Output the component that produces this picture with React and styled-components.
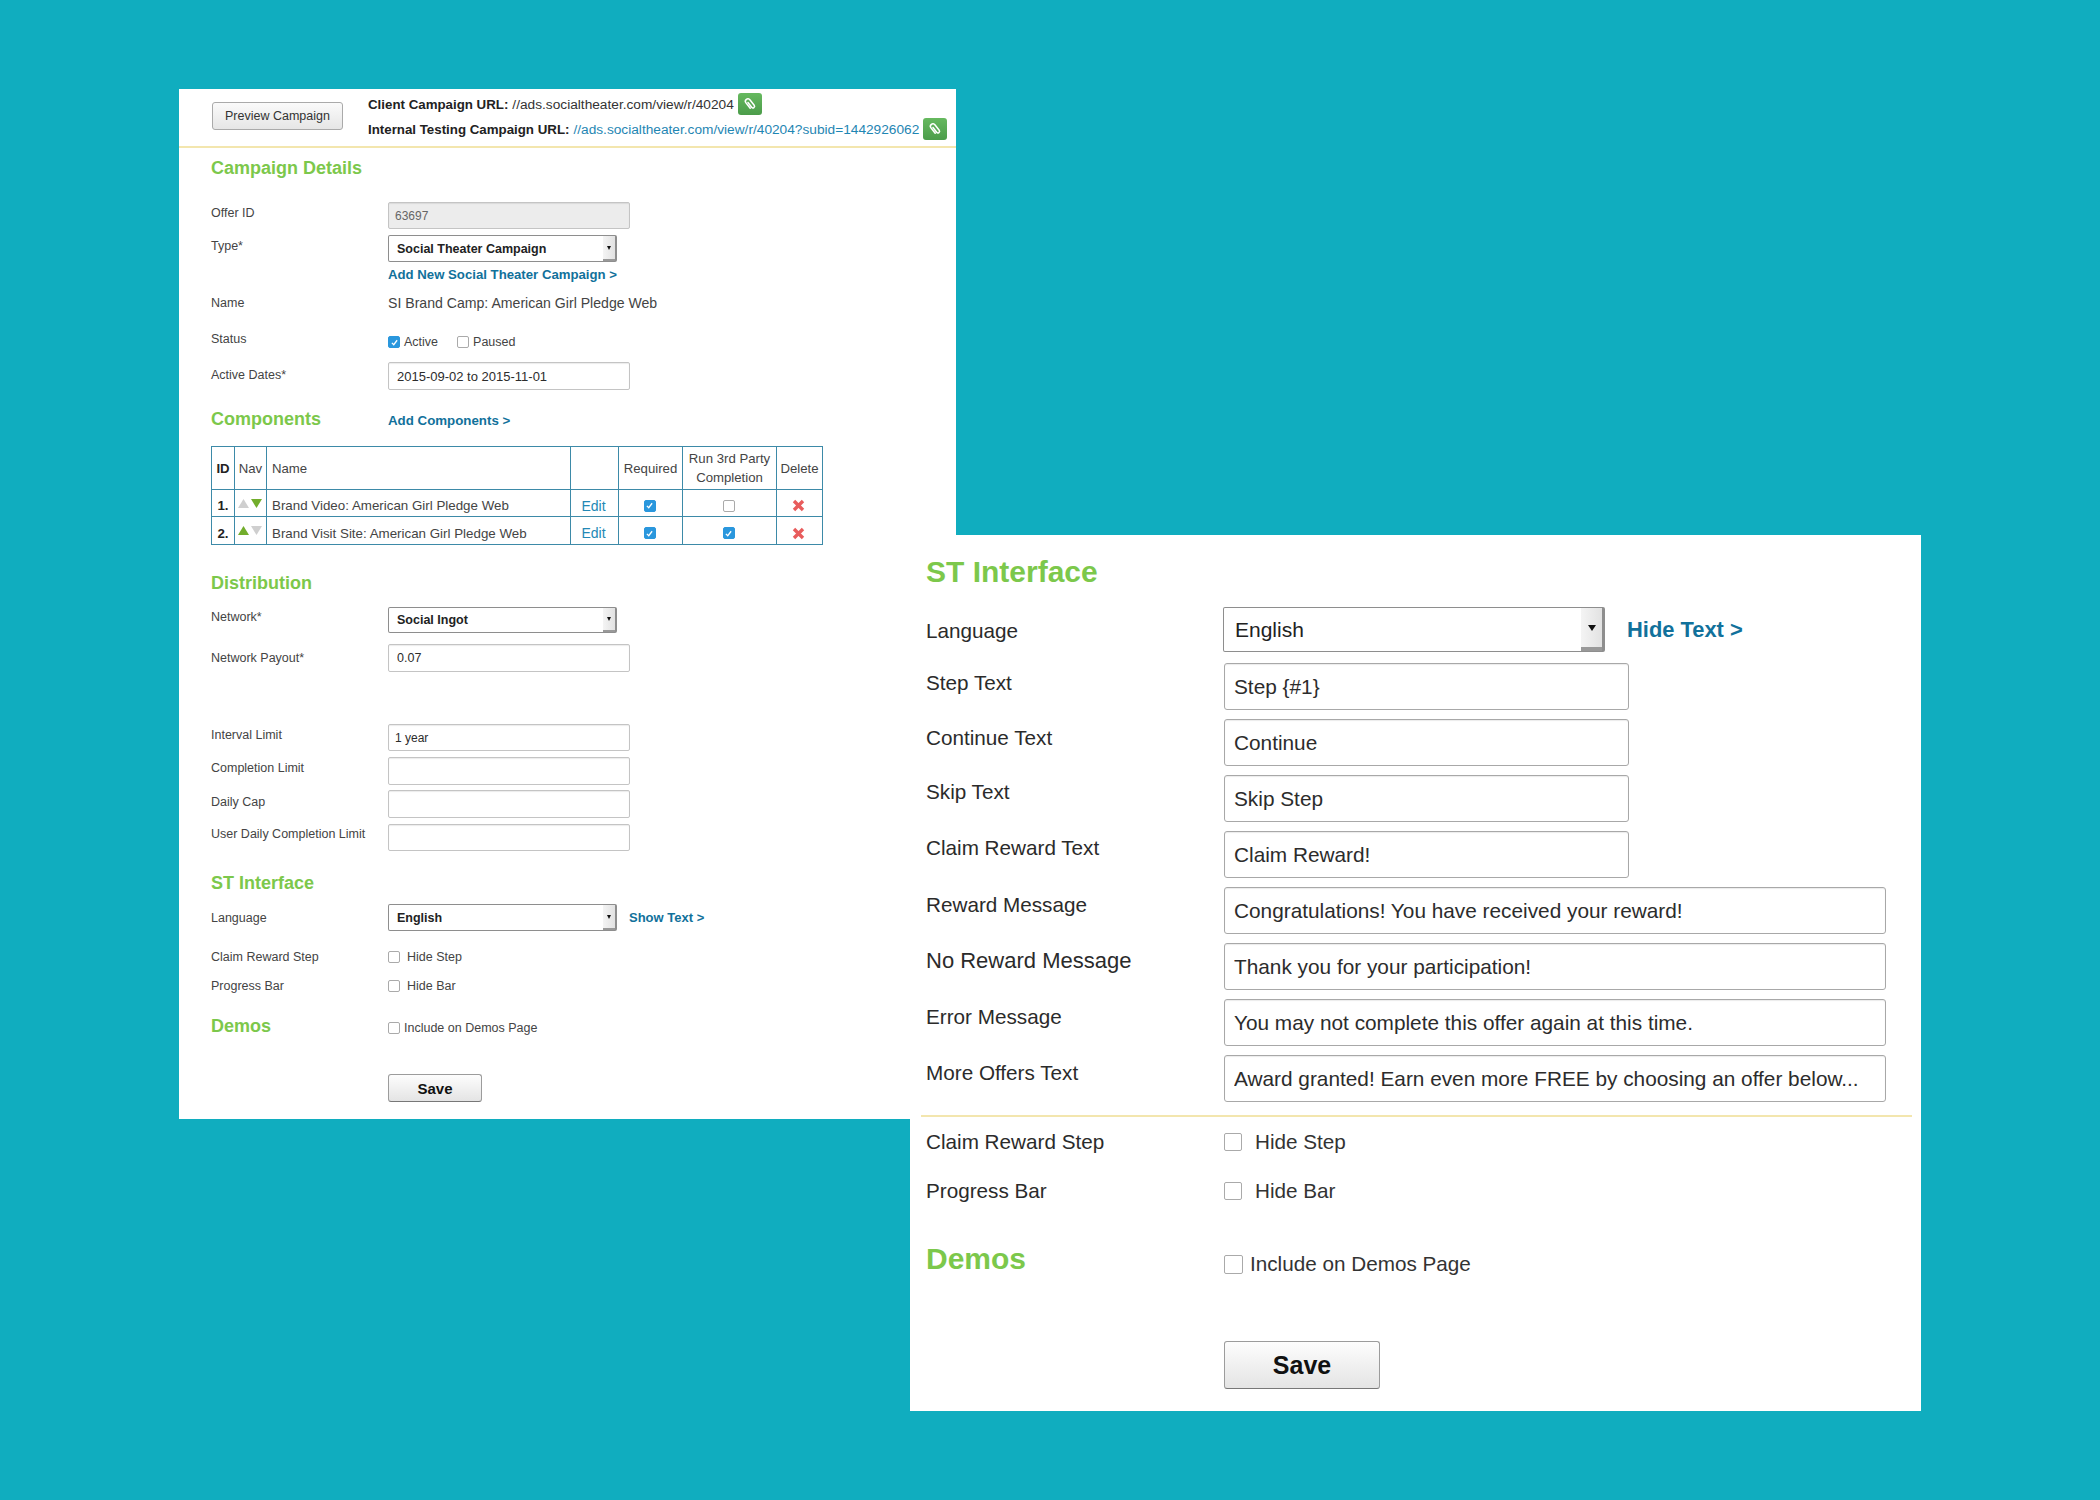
import React from "react";
import styled, { createGlobalStyle } from "styled-components";

const GREEN = "#7cc84b";
const LINK = "#11719b";
const RULE = "#f3e6ae";

const GlobalStyle = createGlobalStyle`
  html, body {
    margin: 0;
    padding: 0;
    background: #10adbf;
    font-family: "Liberation Sans", Arial, sans-serif;
  }
`;

const Stage = styled.div`
  position: relative;
  width: 2100px;
  height: 1500px;
  overflow: hidden;
  background: #10adbf;
`;

// the two screenshots float over each other on the teal canvas
const Window = styled.section`
  position: absolute;
  left: ${(p) => p.$left}px;
  top: ${(p) => p.$top}px;
  width: ${(p) => p.$width}px;
  height: ${(p) => p.$height}px;
  box-sizing: border-box;
  background: #fff;
  padding-left: ${(p) => p.$pad}px;
`;

const Toolbar = styled.header`
  display: flex;
  align-items: center;
  gap: 25px;
  height: 59px;
  box-sizing: border-box;
  margin-left: -32px;
  padding: 0 0 2px 33px;
  border-bottom: 2px solid ${RULE};
`;

const PreviewButton = styled.button`
  width: 131px;
  height: 28px;
  margin-top: -1px;
  padding: 0;
  border: 1px solid #aaa;
  border-radius: 3px;
  background: linear-gradient(#fafafa, #e6e6e6);
  color: #333;
  font: 12.5px "Liberation Sans", Arial, sans-serif;
`;

const UrlList = styled.div`
  display: flex;
  flex-direction: column;
  gap: 1px;
`;

const UrlLine = styled.div`
  display: flex;
  align-items: center;
  gap: 4px;
  height: 24px;
  font-size: 13.7px;
  color: #333;
  white-space: nowrap;
  b {
    color: #222;
    font-size: 13.3px;
  }
  a {
    color: ${(p) => (p.$linked ? "#1f86b3" : "#333")};
  }
`;

const ClipButton = styled.span`
  display: inline-flex;
  align-items: center;
  justify-content: center;
  width: 24px;
  height: 22px;
  border-radius: 3px;
  background: linear-gradient(#66b95f, #4b9c4a);
`;

const Row = styled.div`
  display: grid;
  grid-template-columns: ${(p) => p.$label}px 1fr;
  margin-top: ${(p) => p.$mt || 0}px;
`;

const Label = styled.div`
  padding-top: ${(p) => p.$pt || 0}px;
  line-height: ${(p) => (p.$big ? 28 : 20)}px;
  font-size: ${(p) => p.$fs || (p.$big ? 20.7 : 12.5)}px;
  color: ${(p) => (p.$big ? "#2b2b2b" : "#444")};
  white-space: nowrap;
`;

const Heading = styled.h2`
  margin: ${(p) => p.$mt || 0}px 0 0;
  font-size: ${(p) => (p.$big ? 30 : 18)}px;
  line-height: ${(p) => (p.$big ? 40 : 24)}px;
  font-weight: 700;
  color: ${GREEN};
  white-space: nowrap;
`;

const TextInput = styled.input`
  display: block;
  box-sizing: border-box;
  width: ${(p) => p.$width}px;
  height: ${(p) => p.$height}px;
  padding: 0 0 0 ${(p) => p.$pl}px;
  border: 1px solid ${(p) => (p.$big ? "#a8a8a8" : "#c4c4c4")};
  border-radius: ${(p) => (p.$big ? 3 : 2)}px;
  box-shadow: inset 0 1px 1px rgba(0, 0, 0, 0.08);
  background: ${(p) => (p.disabled ? "#ececec" : "#fff")};
  color: ${(p) => (p.disabled ? "#666" : "#2c2c2c")};
  font: ${(p) => p.$fs || (p.$big ? 20.8 : 12)}px "Liberation Sans", Arial, sans-serif;
  outline: none;
  opacity: 1;
`;

const SelectBox = styled.div`
  display: flex;
  align-items: stretch;
  box-sizing: border-box;
  width: ${(p) => p.$width}px;
  height: ${(p) => p.$height}px;
  border: 1px solid #8e8e8e;
  border-right-width: ${(p) => (p.$big ? 3 : 2)}px;
  border-radius: 2px;
  background: #fff;
`;

const SelectValue = styled.div`
  flex: 1;
  display: flex;
  align-items: center;
  padding-left: ${(p) => (p.$big ? 11 : 8)}px;
  font-size: ${(p) => (p.$big ? 21 : 12.5)}px;
  font-weight: ${(p) => (p.$big ? 400 : 700)};
  color: #222;
`;

const SelectArrow = styled.div`
  display: flex;
  align-items: center;
  justify-content: center;
  box-sizing: border-box;
  width: ${(p) => (p.$big ? 21 : 12)}px;
  border-bottom: ${(p) => (p.$big ? 4 : 2)}px solid #999;
  background: linear-gradient(90deg, #f4f4f4, #e2e2e2);
  &::after {
    content: "";
    border-style: solid;
    border-width: ${(p) => (p.$big ? "6px 4px 0" : "4px 2.5px 0")};
    border-color: #111 transparent transparent;
  }
`;

const LinkText = styled.a`
  display: block;
  color: ${LINK};
  font-weight: 700;
  font-size: ${(p) => p.$size}px;
  line-height: ${(p) => p.$lh}px;
  margin-top: ${(p) => p.$mt || 0}px;
  white-space: nowrap;
`;

const Inline = styled.div`
  display: flex;
  align-items: center;
  gap: ${(p) => p.$gap}px;
`;

const Value = styled.div`
  font-size: 14.1px;
  line-height: 20px;
  color: #444;
  white-space: nowrap;
`;

const CheckLine = styled.label`
  display: flex;
  align-items: center;
  gap: ${(p) => p.$gap}px;
  height: ${(p) => (p.$big ? 28 : 20)}px;
  margin-top: ${(p) => p.$mt || 0}px;
  font-size: ${(p) => (p.$big ? 20.7 : 12.5)}px;
  color: ${(p) => (p.$big ? "#333" : "#444")};
  white-space: nowrap;
`;

const CheckBox = styled.span`
  display: inline-flex;
  align-items: center;
  justify-content: center;
  box-sizing: border-box;
  flex: none;
  width: ${(p) => p.$size}px;
  height: ${(p) => p.$size}px;
  border: 1px solid ${(p) => (p.$on ? "#2a97dd" : "#aaa")};
  border-radius: 2px;
  background: ${(p) => (p.$on ? "#2a97dd" : "#fff")};
`;

const SaveButton = styled.button`
  display: block;
  width: ${(p) => p.$width}px;
  height: ${(p) => p.$height}px;
  padding: 0;
  border: 1px solid #9c9c9c;
  border-bottom-color: #777;
  border-radius: 3px;
  background: linear-gradient(#fdfdfd, #e4e4e4);
  color: #111;
  font: 700 ${(p) => p.$size}px "Liberation Sans", Arial, sans-serif;
`;

const Divider = styled.hr`
  height: 2px;
  width: 991px;
  margin: 13px 0 0 -5px;
  border: 0;
  background: ${RULE};
`;

const Table = styled.table`
  width: 611px;
  margin-top: 15px;
  table-layout: fixed;
  border-collapse: collapse;
  font-size: 13.35px;
  color: #444;
`;

const Th = styled.th`
  padding: 0 ${(p) => (p.$left ? "5px" : "0")};
  height: 42px;
  border: 1px solid #3d8aa8;
  font-size: 13.2px;
  font-weight: ${(p) => (p.$bold ? 700 : 400)};
  color: ${(p) => (p.$bold ? "#222" : "#444")};
  line-height: 19px;
  text-align: ${(p) => (p.$left ? "left" : "center")};
`;

const Td = styled.td`
  padding: ${(p) => (p.$nudge ? 5 : 0)}px ${(p) => (p.$left ? "5px" : "0")} 0;
  box-sizing: border-box;
  height: ${(p) => p.$height}px;
  border: 1px solid #3d8aa8;
  font-weight: ${(p) => (p.$bold ? 700 : 400)};
  color: ${(p) => (p.$bold ? "#222" : "#444")};
  text-align: ${(p) => (p.$left ? "left" : "center")};
  white-space: nowrap;
`;

const CellCenter = styled.div`
  display: flex;
  align-items: center;
  justify-content: center;
  gap: 2px;
  padding-right: ${(p) => p.$pr || 0}px;
`;

const EditLink = styled.a`
  display: block;
  padding-right: 2px;
  color: #2388b5;
  font-size: 14px;
`;

function Clip() {
  return (
    <ClipButton>
      <svg width="16" height="16" viewBox="0 0 16 16" fill="none">
        <path
          d="M5.5 11.5V4.6a2.5 2.5 0 0 1 5 0v7a1.6 1.6 0 0 1-3.2 0V5.6"
          transform="rotate(-38 8 8)"
          stroke="#fff"
          strokeWidth="1.5"
          strokeLinecap="round"
        />
      </svg>
    </ClipButton>
  );
}

function Tick({ size }) {
  return (
    <CheckBox $size={size} $on>
      <svg width={size - 3} height={size - 3} viewBox="0 0 12 12" fill="none">
        <path d="M2.5 6.5 5 9l4.5-6" stroke="#fff" strokeWidth="1.7" />
      </svg>
    </CheckBox>
  );
}

function Check({ on, size = 12 }) {
  return on ? <Tick size={size} /> : <CheckBox $size={size} />;
}

function Select({ value, width, height, big }) {
  return (
    <SelectBox $width={width} $height={height} $big={big}>
      <SelectValue $big={big}>{value}</SelectValue>
      <SelectArrow $big={big} />
    </SelectBox>
  );
}

function Triangle({ down, on }) {
  return (
    <svg width="11" height="9" viewBox="0 0 11 9">
      <polygon
        points={down ? "0,0 11,0 5.5,9" : "5.5,0 11,9 0,9"}
        fill={on ? "#72ad2c" : "#cfcfcf"}
      />
    </svg>
  );
}

function RedX() {
  return (
    <svg width="13" height="13" viewBox="0 0 13 13">
      <path d="M2 2 11 11M11 2 2 11" stroke="#e85c5c" strokeWidth="3.4" />
    </svg>
  );
}

const components = [
  { id: "1.", name: "Brand Video: American Girl Pledge Web", up: false, down: true, third: false, height: 27 },
  { id: "2.", name: "Brand Visit Site: American Girl Pledge Web", up: true, down: false, third: true, height: 28 },
];

const limits = [
  { label: "Interval Limit", value: "1 year", mt: 52, height: 27, pt: 1 },
  { label: "Completion Limit", value: "", mt: 6, height: 28, pt: 1 },
  { label: "Daily Cap", value: "", mt: 5, height: 28, pt: 2 },
  { label: "User Daily Completion Limit", value: "", mt: 6, height: 27, pt: 0 },
];

const textFields = [
  { label: "Step Text", value: "Step {#1}", width: 405, mt: 11, pt: 6 },
  { label: "Continue Text", value: "Continue", width: 405, mt: 9, pt: 5 },
  { label: "Skip Text", value: "Skip Step", width: 405, mt: 9, pt: 3 },
  { label: "Claim Reward Text", value: "Claim Reward!", width: 405, mt: 9, pt: 3 },
  { label: "Reward Message", value: "Congratulations! You have received your reward!", width: 662, mt: 9, pt: 4 },
  { label: "No Reward Message", value: "Thank you for your participation!", width: 662, mt: 9, pt: 4, fs: 22 },
  { label: "Error Message", value: "You may not complete this offer again at this time.", width: 662, mt: 9, pt: 4 },
  { label: "More Offers Text", value: "Award granted! Earn even more FREE by choosing an offer below...", width: 662, mt: 9, pt: 4 },
];

function CampaignWindow() {
  return (
    <Window $left={179} $top={89} $width={777} $height={1030} $pad={32}>
      <Toolbar>
        <PreviewButton>Preview Campaign</PreviewButton>
        <UrlList>
          <UrlLine>
            <b>Client Campaign URL:</b>
            <a>//ads.socialtheater.com/view/r/40204</a>
            <Clip />
          </UrlLine>
          <UrlLine $linked>
            <b>Internal Testing Campaign URL:</b>
            <a>//ads.socialtheater.com/view/r/40204?subid=1442926062</a>
            <Clip />
          </UrlLine>
        </UrlList>
      </Toolbar>

      <Heading $mt={8}>Campaign Details</Heading>

      <Row $label={177} $mt={22}>
        <Label $pt={1}>Offer ID</Label>
        <TextInput disabled defaultValue="63697" $width={242} $height={27} $pl={6} />
      </Row>
      <Row $label={177} $mt={6}>
        <Label $pt={1}>Type*</Label>
        <div>
          <Select value="Social Theater Campaign" width={229} height={27} />
          <LinkText $size={13.2} $lh={16} $mt={5}>Add New Social Theater Campaign &gt;</LinkText>
        </div>
      </Row>
      <Row $label={177} $mt={10}>
        <Label>Name</Label>
        <Value>SI Brand Camp: American Girl Pledge Web</Value>
      </Row>
      <Row $label={177} $mt={16}>
        <Label>Status</Label>
        <Inline $gap={19}>
          <CheckLine $gap={4} $mt={3}><Check on />Active</CheckLine>
          <CheckLine $gap={4} $mt={3}><Check />Paused</CheckLine>
        </Inline>
      </Row>
      <Row $label={177} $mt={10}>
        <Label $pt={3}>Active Dates*</Label>
        <TextInput readOnly defaultValue="2015-09-02 to 2015-11-01" $width={242} $height={28} $pl={8} $fs={13} />
      </Row>

      <Row $label={177} $mt={17}>
        <Heading>Components</Heading>
        <LinkText $size={13.3} $lh={16} $mt={6}>Add Components &gt;</LinkText>
      </Row>
      <Table>
        <colgroup>
          <col width="23" /><col width="32" /><col width="304" /><col width="48" />
          <col width="64" /><col width="94" /><col width="46" />
        </colgroup>
        <thead>
          <tr>
            <Th $bold>ID</Th>
            <Th>Nav</Th>
            <Th $left>Name</Th>
            <Th />
            <Th>Required</Th>
            <Th>Run 3rd Party<br />Completion</Th>
            <Th>Delete</Th>
          </tr>
        </thead>
        <tbody>
          {components.map((c) => (
            <tr key={c.id}>
              <Td $nudge $bold $height={c.height}>{c.id}</Td>
              <Td $height={c.height}>
                <CellCenter $pr={2}>
                  <Triangle on={c.up} />
                  <Triangle down on={c.down} />
                </CellCenter>
              </Td>
              <Td $nudge $left $height={c.height}>{c.name}</Td>
              <Td $nudge $height={c.height}><EditLink>Edit</EditLink></Td>
              <Td $nudge $height={c.height}><CellCenter $pr={2}><Check on /></CellCenter></Td>
              <Td $nudge $height={c.height}><CellCenter $pr={2}><Check on={c.third} /></CellCenter></Td>
              <Td $nudge $height={c.height}><CellCenter $pr={2}><RedX /></CellCenter></Td>
            </tr>
          ))}
        </tbody>
      </Table>

      <Heading $mt={26}>Distribution</Heading>
      <Row $label={177} $mt={12}>
        <Label>Network*</Label>
        <Select value="Social Ingot" width={229} height={26} />
      </Row>
      <Row $label={177} $mt={11}>
        <Label $pt={4}>Network Payout*</Label>
        <TextInput readOnly defaultValue="0.07" $width={242} $height={28} $pl={8} $fs={12.5} />
      </Row>

      {limits.map((l) => (
        <Row key={l.label} $label={177} $mt={l.mt}>
          <Label $pt={l.pt}>{l.label}</Label>
          <TextInput readOnly defaultValue={l.value} $width={242} $height={l.height} $pl={6} />
        </Row>
      ))}

      <Heading $mt={20}>ST Interface</Heading>
      <Row $label={177} $mt={9}>
        <Label $pt={4}>Language</Label>
        <Inline $gap={12}>
          <Select value="English" width={229} height={27} />
          <LinkText $size={13} $lh={16}>Show Text &gt;</LinkText>
        </Inline>
      </Row>
      <Row $label={177} $mt={16}>
        <Label>Claim Reward Step</Label>
        <CheckLine $gap={7}><Check />Hide Step</CheckLine>
      </Row>
      <Row $label={177} $mt={9}>
        <Label>Progress Bar</Label>
        <CheckLine $gap={7}><Check />Hide Bar</CheckLine>
      </Row>
      <Row $label={177} $mt={18}>
        <Heading>Demos</Heading>
        <CheckLine $gap={4} $mt={4}><Check />Include on Demos Page</CheckLine>
      </Row>
      <Row $label={177} $mt={36}>
        <span />
        <SaveButton $width={94} $height={28} $size={15}>Save</SaveButton>
      </Row>
    </Window>
  );
}

function InterfaceWindow() {
  return (
    <Window $left={910} $top={535} $width={1011} $height={876} $pad={16}>
      <Heading $big $mt={17}>ST Interface</Heading>
      <Row $label={297} $mt={15}>
        <Label $big $pt={10}>Language</Label>
        <Inline $gap={22}>
          <Select big value="English" width={382} height={45} />
          <LinkText $size={21.9} $lh={28}>Hide Text &gt;</LinkText>
        </Inline>
      </Row>
      {textFields.map((f) => (
        <Row key={f.label} $label={298} $mt={f.mt}>
          <Label $big $pt={f.pt} $fs={f.fs}>{f.label}</Label>
          <TextInput $big readOnly defaultValue={f.value} $width={f.width} $height={47} $pl={9} />
        </Row>
      ))}
      <Divider />
      <Row $label={298} $mt={11}>
        <Label $big>Claim Reward Step</Label>
        <CheckLine $big $gap={13}><Check size={18} />Hide Step</CheckLine>
      </Row>
      <Row $label={298} $mt={21}>
        <Label $big>Progress Bar</Label>
        <CheckLine $big $gap={13}><Check size={18} />Hide Bar</CheckLine>
      </Row>
      <Row $label={298} $mt={34}>
        <Heading $big>Demos</Heading>
        <CheckLine $big $gap={7} $mt={11}><Check size={19} />Include on Demos Page</CheckLine>
      </Row>
      <Row $label={298} $mt={62}>
        <span />
        <SaveButton $width={156} $height={48} $size={25}>Save</SaveButton>
      </Row>
    </Window>
  );
}

export default function App() {
  return (
    <>
      <GlobalStyle />
      <Stage>
        <CampaignWindow />
        <InterfaceWindow />
      </Stage>
    </>
  );
}
